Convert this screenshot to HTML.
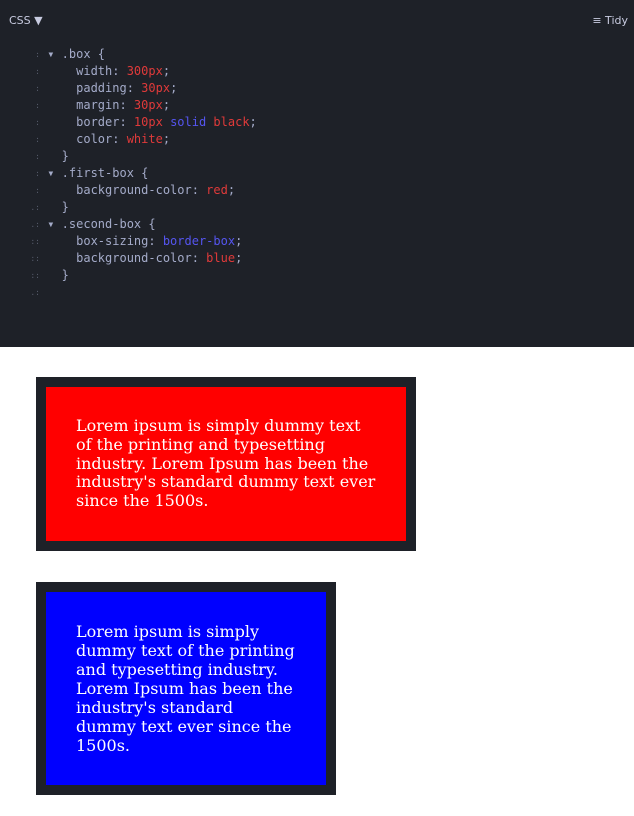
<!DOCTYPE html>
<html><head><style>
body{margin:0;width:634px;height:816px;background:#fff;overflow:hidden}
.ed{position:relative;height:347px;background:#1e2128;font-family:"DejaVu Sans Mono","Liberation Mono",monospace;font-size:12px;color:#a4abc9}
.hdr{position:absolute;left:9px;top:14px;font-family:"DejaVu Sans","Liberation Sans",sans-serif;font-size:11px;color:#c8cbe0}
.tidy{position:absolute;right:6px;top:14px;font-family:"DejaVu Sans","Liberation Sans",sans-serif;font-size:11px;color:#c8cbe0}
.code{position:absolute;left:0;top:46px;white-space:pre}
.code div{height:17px;line-height:17px}
.ln{display:inline-block;width:40px;color:#555a6a;font-size:8px;line-height:17px;vertical-align:top;text-align:right}
.r{color:#e03a3a}.b{color:#5555f0}
.box{width:300px;padding:30px;margin:30px 36px;border:10px solid #1e2128;color:#fff;font-family:"DejaVu Serif",serif;font-size:16px;line-height:19px}
.f{background:red;margin-top:30px;line-height:18.8px;height:94px}
.s{box-sizing:border-box;background:blue;margin-top:31px;height:213px}
</style></head><body>
<div class="ed">
<div class="hdr">CSS &#9660;</div>
<div class="tidy">&#8801; Tidy</div>
<div class="code"><div><span class="ln">:</span> ▾ .box {</div><div><span class="ln">:</span>     width: <span class="r">300px</span>;</div><div><span class="ln">:</span>     padding: <span class="r">30px</span>;</div><div><span class="ln">:</span>     margin: <span class="r">30px</span>;</div><div><span class="ln">:</span>     border: <span class="r">10px</span> <span class="b">solid</span> <span class="r">black</span>;</div><div><span class="ln">:</span>     color: <span class="r">white</span>;</div><div><span class="ln">:</span>   }</div><div><span class="ln">:</span> ▾ .first-box {</div><div><span class="ln">:</span>     background-color: <span class="r">red</span>;</div><div><span class="ln">.:</span>   }</div><div><span class="ln">.:</span> ▾ .second-box {</div><div><span class="ln">::</span>     box-sizing: <span class="b">border-box</span>;</div><div><span class="ln">::</span>     background-color: <span class="r">blue</span>;</div><div><span class="ln">::</span>   }</div><div><span class="ln">.:</span></div></div>
</div>
<div class="box f">Lorem ipsum is simply dummy text of the printing and typesetting industry. Lorem Ipsum has been the industry's standard dummy text ever since the 1500s.</div>
<div class="box s">Lorem ipsum is simply dummy text of the printing and typesetting industry. Lorem Ipsum has been the industry's standard dummy text ever since the 1500s.</div>
</body></html>
